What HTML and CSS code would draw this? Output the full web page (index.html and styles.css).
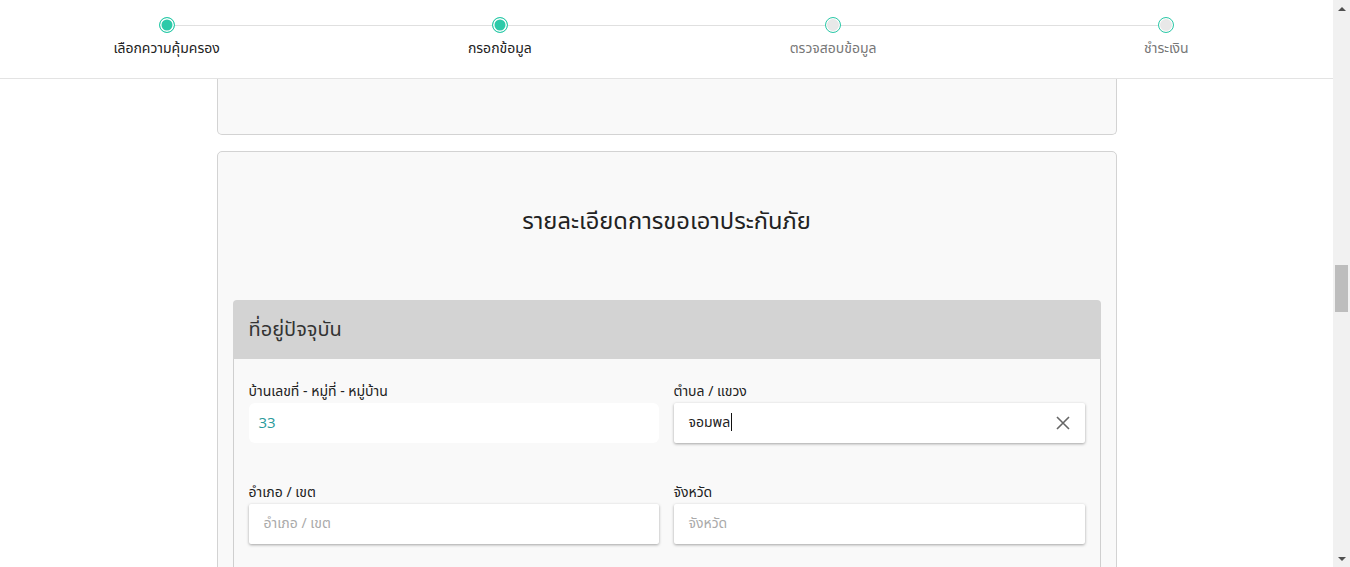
FILE: index.html
```html
<!DOCTYPE html>
<html lang="th">
<head>
<meta charset="utf-8">
<title>กรอกข้อมูล</title>
<link rel="stylesheet" href="styles.css">
</head>
<body>
<div class="page">
  <header class="topbar">
    <div class="steps">
      <div class="step done"><span class="dot"></span><span class="step-label">เลือกความคุ้มครอง</span></div>
      <div class="step done"><span class="dot"></span><span class="step-label">กรอกข้อมูล</span></div>
      <div class="step"><span class="dot"></span><span class="step-label">ตรวจสอบข้อมูล</span></div>
      <div class="step"><span class="dot"></span><span class="step-label">ชำระเงิน</span></div>
    </div>
  </header>
  <main class="content">
    <div class="card card-tail"></div>
    <div class="card card-main">
      <h2 class="card-title">รายละเอียดการขอเอาประกันภัย</h2>
      <section class="section">
        <div class="section-head">ที่อยู่ปัจจุบัน</div>
        <div class="section-body">
          <div class="field-row">
            <div class="field">
              <label class="field-label">บ้านเลขที่ - หมู่ที่ - หมู่บ้าน</label>
              <div class="input flat"><span class="value teal">33</span></div>
            </div>
            <div class="field">
              <label class="field-label">ตำบล / แขวง</label>
              <div class="input raised"><span class="value">จอมพล<span class="caret"></span></span>
                <svg class="clear" width="14" height="14" viewBox="0 0 14 14"><path d="M1 1L13 13M13 1L1 13" stroke="#666" stroke-width="1.6" fill="none"/></svg>
              </div>
            </div>
          </div>
          <div class="field-row">
            <div class="field">
              <label class="field-label">อำเภอ / เขต</label>
              <div class="input raised"><span class="placeholder">อำเภอ / เขต</span></div>
            </div>
            <div class="field">
              <label class="field-label">จังหวัด</label>
              <div class="input raised"><span class="placeholder">จังหวัด</span></div>
            </div>
          </div>
        </div>
      </section>
    </div>
  </main>
</div>
<div class="scrollbar">
  <div class="sb-arrow up"></div>
  <div class="sb-track"><div class="sb-thumb"></div></div>
  <div class="sb-arrow down"></div>
</div>
</body>
</html>
```
FILE: styles.css
```css
* { box-sizing: border-box; }
html, body { margin: 0; padding: 0; }
body {
  display: flex;
  height: 567px;
  overflow: hidden;
  background: #fff;
  font-family: "Noto Sans Thai", "Noto Sans", "Liberation Sans", sans-serif;
  color: #222;
}
.page { flex: 1; display: flex; flex-direction: column; min-width: 0; }
.topbar {
  height: 79px;
  border-bottom: 1px solid #e3e3e3;
  background: #fff;
  flex-shrink: 0;
}
.steps {
  display: grid;
  grid-template-columns: repeat(4, 1fr);
  position: relative;
  padding-top: 17px;
}
.steps::before {
  content: "";
  position: absolute;
  left: 12.5%;
  right: 12.5%;
  top: 25px;
  height: 1px;
  background: #e0e0e0;
}
.step { display: flex; flex-direction: column; align-items: center; position: relative; }
.dot {
  width: 16px; height: 16px;
  border-radius: 50%;
  border: 1.5px solid #2ccaa9;
  background: #e8e8e8;
  box-shadow: inset 0 0 0 1px #fff;
}
.step.done .dot { background: #2ccaa9; box-shadow: inset 0 0 0 1.5px #fff; }
.step-label { margin-top: 6px; font-size: 14px; line-height: 20px; color: #777; }
.step.done .step-label { color: #222; }

.content { display: flex; flex-direction: column; align-items: center; }
.card {
  width: 900px;
  background: #f9f9f9;
  border: 1px solid #d3d3d3;
  border-radius: 5px;
}
.card-tail { height: 56px; border-top: none; border-top-left-radius: 0; border-top-right-radius: 0; }
.card-main { margin-top: 16px; padding: 50px 15px 0; }
.card-title {
  margin: 0;
  text-align: center;
  font-weight: 400;
  font-size: 23.7px;
  line-height: 40px;
  color: #222;
}
.section { margin-top: 58px; border-radius: 4px; }
.section-head {
  height: 59px;
  background: #d3d3d3;
  border-radius: 4px 4px 0 0;
  padding: 0 16px;
  display: flex;
  align-items: center;
  font-size: 20px;
  color: #333;
}
.section-body {
  border: 1px solid #cfcfcf;
  border-top: none;
  padding: 22px 15px 30px;
  display: flex;
  flex-direction: column;
  gap: 39px;
}
.field-row { display: grid; grid-template-columns: 410px 411px; gap: 15px; }
.field { display: flex; flex-direction: column; }
.field-label { font-size: 14px; line-height: 22px; margin-bottom: 0; color: #222; }
.input {
  height: 40px;
  background: #fff;
  border-radius: 4px;
  display: flex;
  align-items: center;
  padding: 0 15px 2px;
  font-size: 14px;
}
.input.flat { padding-left: 10px; border-radius: 6px; }
.input.raised { border-radius: 2px; box-shadow: 0 1px 3px rgba(0,0,0,0.35); }
.value { flex: 1; color: #222; display: flex; align-items: center; }
.value.teal { color: #2a9a9a; font-family: "Open Sans", sans-serif; font-size: 15px; }
.caret { display: inline-block; width: 1px; height: 18px; background: #111; margin-left: 1px; }
.placeholder { color: #aaa; }
.clear { flex-shrink: 0; margin-top: 2px; }

.scrollbar {
  width: 17px;
  flex-shrink: 0;
  background: #f1f1f1;
  display: flex;
  flex-direction: column;
}
.sb-arrow { height: 17px; display: flex; justify-content: center; align-items: center; }
.sb-arrow::after { content: ""; border-left: 4px solid transparent; border-right: 4px solid transparent; }
.sb-arrow.up::after { border-bottom: 4px solid #505050; }
.sb-arrow.down::after { border-top: 4px solid #505050; }
.sb-track { flex: 1; padding-top: 248px; display: flex; justify-content: center; }
.sb-thumb { width: 13px; height: 47px; background: #bdbdbd; }
```
